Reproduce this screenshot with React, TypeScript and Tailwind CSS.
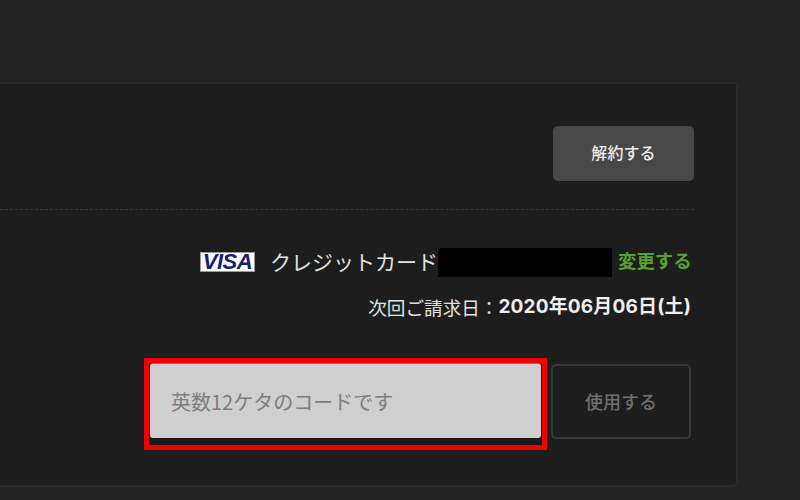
const jp = '"Noto Sans CJK JP", "Liberation Sans", sans-serif';

export default function App() {
  return (
    <div className="w-[800px] h-[500px] overflow-hidden bg-[#232323] pt-[82px]" style={{ fontFamily: jp }}>
      <div className="w-[738px] h-[405px] bg-[#1d1d1d] border-2 border-l-0 border-[#2a2a2a] rounded-r-[5px] pr-[42px]">
        <div className="h-[126px] pt-[42px] flex justify-end border-b border-dashed border-[#3a3a3a]">
          <button className="w-[141px] h-[55px] pb-[3px] rounded-[5px] bg-[#484848] text-[#eeeeee] text-[16px] tracking-[0.1px] font-medium">解約する</button>
        </div>
        <div className="pr-[3px] pt-[37px] flex flex-col items-end">
          <div className="flex items-center h-[30px]">
            <div className="w-[55px] h-[20px] bg-white flex items-center justify-center mr-[15px] border border-[#999999]">
              <span className="text-[#1a2070] text-[22px] leading-[20px] font-bold italic tracking-[-0.5px]" style={{ fontFamily: '"Liberation Sans", sans-serif' }}>VISA</span>
            </div>
            <span className="text-[#e2e2e2] text-[21px] leading-[30px] w-[168px] whitespace-nowrap -translate-y-px">クレジットカード</span>
            <div className="w-[174px] h-[29px] bg-black" />
            <span className="ml-[6px] text-[#5aa22c] text-[18.4px] leading-[26px] -translate-y-[2px] font-bold w-[73px] whitespace-nowrap">変更する</span>
          </div>
          <div className="flex items-center h-[30px] mt-[15px] text-[18.6px] text-[#e2e2e2] whitespace-nowrap">
            <span>次回ご請求日：</span>
            <span className="font-bold text-[#eeeeee] text-[19px] tracking-[0.17px]" style={{ fontFamily: 'Inter, "Noto Sans CJK JP", sans-serif' }}>2020年06月06日(土)</span>
          </div>
          <div className="flex items-start mt-[36px]">
            <div className="w-[403px] h-[92px] border-[5px] border-[#f00000] bg-[#1a1a1a] mr-[4px]">
              <div className="h-[75px] ml-px mr-[1px] rounded-[3px] bg-[#cfcfcf] border-t border-[#777777] flex items-center pl-[21px] pt-[2px] text-[#7d7d7d] text-[20px]">英数12ケタのコードです</div>
            </div>
            <button className="w-[140px] h-[75px] mt-[6px] rounded-[5px] border-2 border-[#383838] text-[#6f6f6f] text-[18px] font-medium">使用する</button>
          </div>
        </div>
      </div>
    </div>
  );
}
